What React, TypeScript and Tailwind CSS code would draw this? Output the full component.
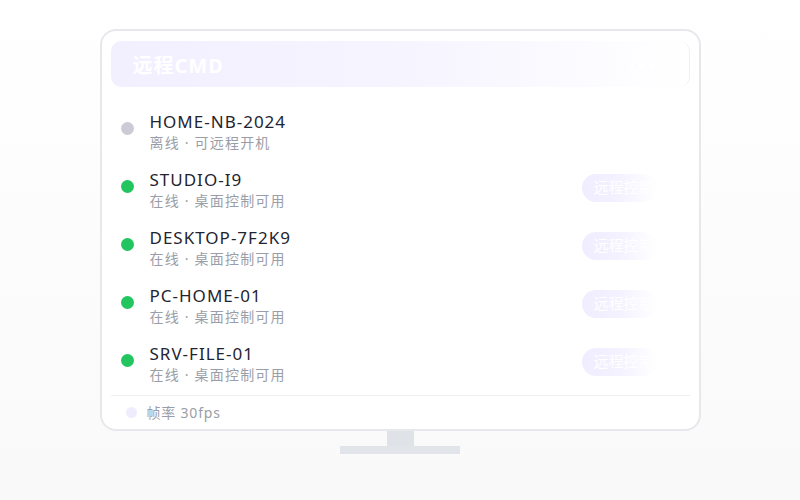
const DEVICES = [
  { name: 'HOME-NB-2024', status: '离线 · 可远程开机', online: false },
  { name: 'STUDIO-I9', status: '在线 · 桌面控制可用', online: true },
  { name: 'DESKTOP-7F2K9', status: '在线 · 桌面控制可用', online: true },
  { name: 'PC-HOME-01', status: '在线 · 桌面控制可用', online: true },
  { name: 'SRV-FILE-01', status: '在线 · 桌面控制可用', online: true },
]

const FONT = { fontFamily: '"Noto Sans", "Noto Sans CJK SC", sans-serif' }

function DeviceRow({ name, status, online }: { name: string; status: string; online: boolean }) {
  return (
    <div className="flex items-center pl-[10px] pr-[33px]">
      <span
        className={`-mt-[6px] h-[13px] w-[13px] shrink-0 rounded-full ${online ? 'bg-[#22c55e]' : 'bg-[#cbcbd6]'}`}
      />
      <div className="ml-[16px] flex-1">
        <div className="text-[17px] leading-[23px] tracking-[1px] text-[#1f2430]">{name}</div>
        <div className="text-[14px] leading-[20px] tracking-[1.2px] text-[#9a9ea8]">{status}</div>
      </div>
      {online && (
        <button
          type="button"
          className="-mt-[4px] h-[28px] w-[75px] rounded-full bg-gradient-to-r from-[#efedff] via-[#f4f2ff] to-white pl-[12px] text-left text-[15px] text-white"
          style={{ fontFamily: '"Noto Sans CJK SC", serif' }}
        >
          远程控制
        </button>
      )}
    </div>
  )
}

export default function App() {
  return (
    <div className="flex h-[500px] w-[800px] flex-col items-center bg-gradient-to-b from-white via-[#fcfcfc] to-[#f9f9fa] pt-[29px]" style={FONT}>
      <div className="flex h-[402px] w-[601px] flex-col rounded-[16px] border-2 border-[#e6e8ec] bg-white p-[9px] pb-0">
        <div className="mt-[1px] flex h-[46px] items-center rounded-[10px] border-r border-[#eef0f3] bg-gradient-to-r from-[#f2f0ff] via-[#f6f4ff] to-white pl-[22px] pr-[20px] pt-[3px]">
          <span className="text-[20px] font-bold tracking-[1px] text-white">远程CMD</span>
          <div className="ml-auto flex items-center gap-[5px] pr-[14px]">
            <span className="h-[3px] w-[3px] rounded-full bg-white" />
            <span className="h-[6px] w-[6px] rounded-full bg-white" />
            <span className="h-[6px] w-[6px] rounded-full bg-white" />
          </div>
        </div>
        <div className="mt-[23px] flex flex-col gap-[15px]">
          {DEVICES.map((d) => (
            <DeviceRow key={d.name} {...d} />
          ))}
        </div>
        <div className="mt-[10px] flex h-[33px] items-center border-t border-[#eef0f3] pl-[15px]">
          <span className="h-[11px] w-[11px] rounded-full bg-[#efecfd]" />
          <span className="ml-[10px] text-[14px] tracking-[0.8px] text-[#9a9ea8]">帧率 30fps</span>
        </div>
      </div>
      <div className="h-[15px] w-[27px] bg-[#dfe2e6]" />
      <div className="h-[8px] w-[120px] bg-[#e1e4e8]" />
    </div>
  )
}
